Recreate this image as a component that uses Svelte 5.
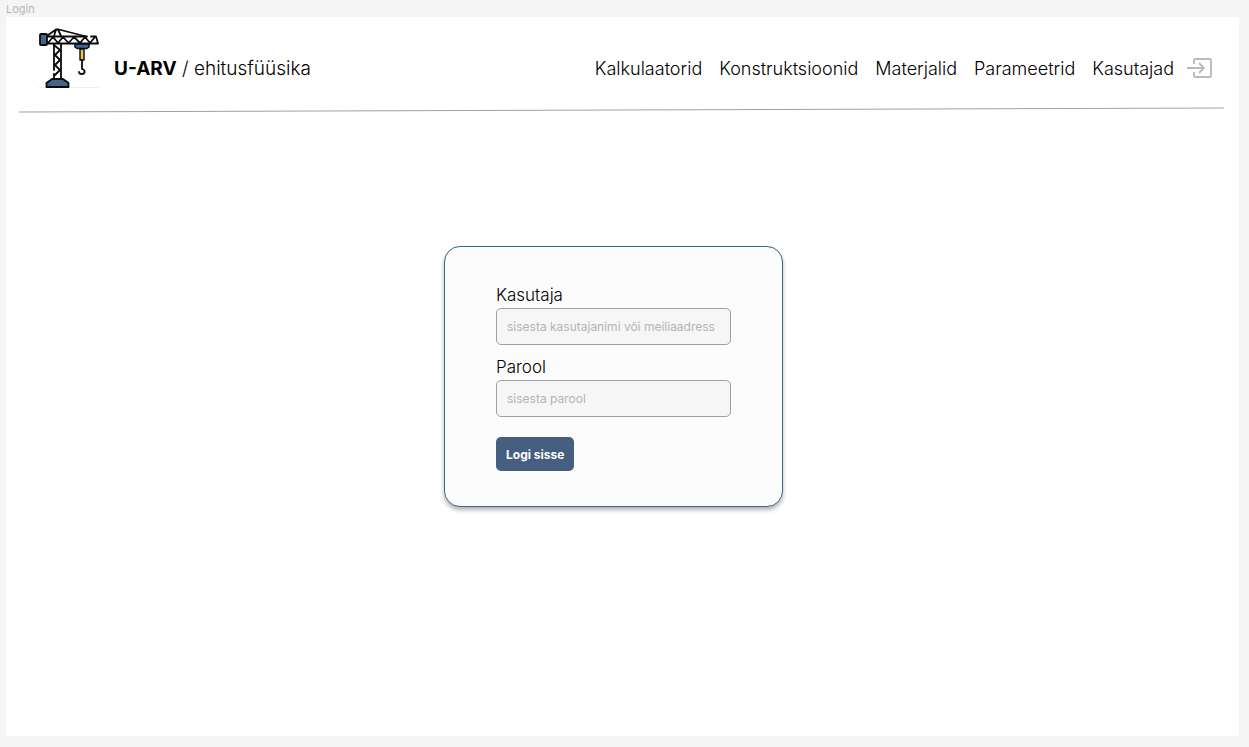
<script>
  const links = ['Kalkulaatorid', 'Konstruktsioonid', 'Materjalid', 'Parameetrid', 'Kasutajad'];
  let user = $state('');
  let password = $state('');
</script>

<div class="canvas">
  <div class="frame-name">Login</div>
  <div class="frame">
    <header>
      <a class="brand" href="#home">
        <svg class="logo" viewBox="0 0 62 62" aria-hidden="true" fill="none" stroke="#080a0c" stroke-width="1.8" stroke-linejoin="round" stroke-linecap="round">
          <path d="M1 60.5H61" stroke="#eeeeee" stroke-width="1" />
          <path d="M8 9.5 18 2.5H21L48 9.5M18 2.5 16 9M20 2.5 23 9" />
          <path d="M9 9.5H49M53 9.5H58L60 16.5H9" />
          <path d="M10 16 15 10 20 16 25 10 30.500 16 36 10 42 16 47 10 52 16 57 10" />
          <path d="M16 17V43M16 47V51M23 17V51" />
          <path d="M16 18 22 23 17 28 22 33 17 38 22 43 17 48" />
          <rect x="2" y="7" width="7" height="11" rx="1" fill="#466388" />
          <path d="M37 17H51V20L49 21.500H39L37 20Z" fill="#466388" stroke-width="1.5" />
          <rect x="42" y="22" width="4" height="11" fill="#e8c65b" stroke-width="1.4" />
          <path d="M44 33V42C48 43 47 47 44 47C42 47 41 46 41 45" />
          <path d="M8.500 60V56L14 52H25L30.500 56V60Z" fill="#466388" />
        </svg>
        <span><strong>U-ARV</strong> / ehitusfüüsika</span>
      </a>
      <nav>
        {#each links as link}
          <a href={'#' + link.toLowerCase()}>{link}</a>
        {/each}
        <a class="enter" href="#login" aria-label="Logi sisse">
          <svg viewBox="0 0 26 22" fill="none" stroke="#b9b9b9" stroke-width="1.8" stroke-linejoin="round">
            <path d="M7 6V2Q7 1 8 1H23Q24 1 24 2V18Q24 19 23 19H8Q7 19 7 18V14" />
            <path d="M0 10H17M12 5L17 10L12 15" />
          </svg>
        </a>
      </nav>
    </header>
    <svg class="divider" viewBox="0 0 1205 6" preserveAspectRatio="none" aria-hidden="true">
      <path d="M0 5L1205 1" stroke="#a0a0a0" />
    </svg>
    <main>
      <form onsubmit={(e) => e.preventDefault()}>
        <div class="field">
          <label for="user">Kasutaja</label>
          <input id="user" type="text" placeholder="sisesta kasutajanimi või meiliaadress" bind:value={user} />
        </div>
        <div class="field">
          <label for="password">Parool</label>
          <input id="password" type="password" placeholder="sisesta parool" bind:value={password} />
        </div>
        <button type="submit">Logi sisse</button>
      </form>
    </main>
  </div>
</div>

<style>
  :global(body) {
    background: #f5f5f5;
  }
  .canvas {
    box-sizing: border-box;
    min-height: 100vh;
    display: flex;
    flex-direction: column;
    padding: 2px 10px 11px 6px;
    font-family: Inter, sans-serif;
    color: #000;
  }
  .frame-name {
    font-size: 11px;
    line-height: 15px;
    color: #b8b8b8;
  }
  .frame {
    flex: 1;
    background: #fff;
    padding: 10px 15px 16px 13px;
  }
  header {
    display: flex;
    align-items: center;
    justify-content: space-between;
    padding: 0 11px 0 19px;
    font-size: 18px;
    font-weight: 300;
    line-height: 24px;
  }
  a {
    color: inherit;
    text-decoration: none;
  }
  .brand {
    display: flex;
    align-items: center;
    gap: 14px;
    font-size: 19px;
  }
  strong {
    font-weight: 700;
  }
  .brand span,
  nav {
    padding-top: 22px;
  }
  .logo {
    width: 62px;
    height: 62px;
  }
  nav {
    display: flex;
    align-items: center;
    gap: 17px;
  }
  .enter {
    display: flex;
    margin-left: -4px;
  }
  .enter svg {
    width: 26px;
    height: 22px;
  }
  .divider {
    display: block;
    width: 100%;
    height: 6px;
    margin-top: 18px;
  }
  main {
    display: flex;
    justify-content: center;
    padding: 133px 16px 0 0;
  }
  form {
    box-sizing: border-box;
    width: 339px;
    padding: 37px 51px 35px;
    border: 1px solid #46618f;
    border-radius: 16px;
    background: #fcfcfc;
    box-shadow: 0 3px 4px rgba(0, 0, 0, 0.3);
  }
  .field {
    display: flex;
    flex-direction: column;
    gap: 2px;
    margin-bottom: 11px;
  }
  label {
    font-size: 17px;
    font-weight: 300;
    line-height: 22px;
  }
  input {
    box-sizing: border-box;
    width: 100%;
    height: 37px;
    padding: 0 10px;
    border: 1px solid #a0a0a0;
    border-radius: 5px;
    background: #f6f6f6;
    font: 12px Inter, sans-serif;
  }
  input::placeholder {
    color: #b5b5b5;
  }
  button {
    display: block;
    margin-top: 20px;
    height: 34px;
    padding: 0 10px;
    border: 0;
    border-radius: 5px;
    background: #465e80;
    color: #fff;
    font: 700 12px Inter, sans-serif;
  }
</style>
